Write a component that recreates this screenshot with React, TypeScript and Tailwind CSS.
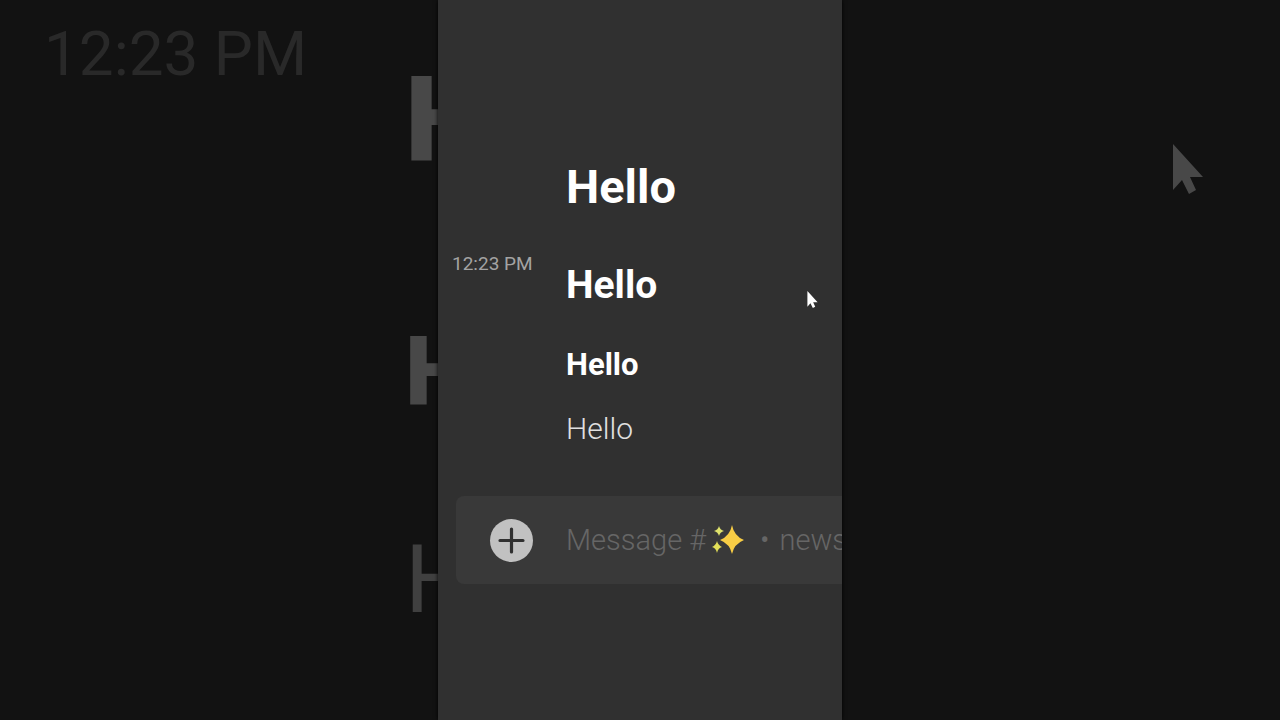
import React from "react";

function Pointer({ className }: { className: string }) {
  return (
    <svg viewBox="0 0 32 50" className={className} aria-hidden="true">
      <path d="M1 0V46L10 36L17 50L24 46L18 33H31Z" fill="currentColor" />
    </svg>
  );
}

function Sparkles() {
  return (
    <svg viewBox="0 0 32 32" className="mr-4 ml-1.5 h-8 w-8 shrink-0" aria-label="sparkles" role="img">
      <path d="M20 1Q22 12 32 16Q22 20 20 30Q18 20 8 16Q18 12 20 1Z" fill="#f8cd45" />
      <path d="M7 2Q8 6 12 7Q8 8 7 12Q6 8 2 7Q6 6 7 2Z" fill="#dfe36c" />
      <path d="M5 17Q6 21 10 23Q6 24 5 29Q4 24 0 23Q4 21 5 17Z" fill="#e2df58" />
    </svg>
  );
}

export default function App() {
  return (
    <main className="flex min-h-screen overflow-hidden bg-[#121212] font-[Roboto,'Liberation_Sans',sans-serif]">
      <div className="flex min-w-0 flex-1 flex-col overflow-hidden" aria-hidden="true">
        <div className="h-[62px] pt-5 pl-11 text-[62px] leading-[68px] whitespace-nowrap text-[#292929]">12:23 PM</div>
        <div className="flex flex-col items-end text-[#484848]">
          <div className="h-60 w-[33px] overflow-hidden text-[118px] leading-[116px] font-black">H</div>
          <div className="h-[220px] w-[33px] overflow-hidden text-[96px] leading-[140px] font-black">H</div>
          <div className="w-[33px] overflow-hidden text-[94px] leading-[116px] font-normal text-[#404040]">H</div>
        </div>
      </div>

      <section className="z-10 w-[404px] shrink-0 overflow-hidden bg-[#303030] pt-[155px] shadow-[0_0_4px_#000]">
        <div className="grid grid-cols-[128px_1fr] text-white">
          <h1 className="col-start-2 text-[47px] leading-[64px] font-bold">Hello</h1>
          <time className="pt-8 pl-3.5 text-[19px] leading-[26px] whitespace-nowrap text-[#a3a3a3]">12:23 PM</time>
          <div className="flex items-start justify-between pt-8 pr-6">
            <h2 className="text-[39px] leading-[68px] font-bold">Hello</h2>
            <Pointer className="mt-10 h-[17px] w-[11px]" />
          </div>
          <h3 className="col-start-2 pt-3.5 text-[31px] leading-[64px] font-bold">Hello</h3>
          <p className="col-start-2 pt-0.5 text-[30px] leading-[60px] font-light text-[#e0e0e0]">Hello</p>
        </div>

        <form className="mt-[37px] ml-[18px] flex h-22 items-center rounded-l-lg bg-[#393939]" onSubmit={(e) => e.preventDefault()}>
          <button type="button" aria-label="Add attachment" className="ml-[34px] h-[43px] w-[43px] shrink-0 rounded-full bg-[#c1c1c1] text-[#303030]">
            <svg viewBox="0 0 43 43" className="h-full w-full" aria-hidden="true">
              <path d="M21.500 10V33M10 21.500H33" stroke="currentColor" strokeWidth="3.200" strokeLinecap="round" />
            </svg>
          </button>
          <div className="relative ml-[33px] h-full min-w-0 flex-1 overflow-hidden">
            <label htmlFor="message" className="flex h-full items-center text-[29px] leading-9 font-light whitespace-nowrap text-[#666666]">
              Message #<Sparkles />
              <span className="mr-2.5">•</span>
              <span>news</span>
            </label>
            <input id="message" type="text" className="absolute inset-0 w-full bg-transparent text-[29px] text-white outline-none" />
          </div>
        </form>
      </section>

      <div className="min-w-0 flex-1" aria-hidden="true">
        <div className="flex justify-end pt-36 pr-[76px]">
          <Pointer className="h-[50px] w-8 text-[#484848]" />
        </div>
      </div>
    </main>
  );
}
